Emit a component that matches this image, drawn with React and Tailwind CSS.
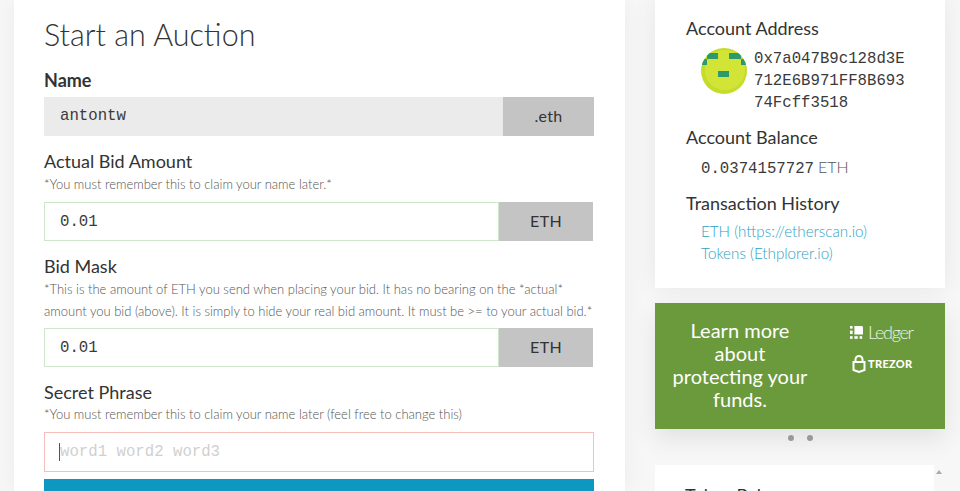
import React from 'react';

const mono = "font-['Liberation_Mono',monospace]";

const Unit = ({ children, className = '' }) => (
  <div className={`flex items-center justify-center bg-[#c4c4c4] pb-[2px] text-[16px] tracking-[0.3px] text-[#333] ${className}`}>
    {children}
  </div>
);

const AmountRow = () => (
  <div className="flex h-[39px] w-[549px]">
    <input
      readOnly
      value="0.01"
      className={`h-full w-[455px] border border-[#cfe6cc] bg-white px-[15px] text-[15.7px] text-[#3a3a3a] outline-none ${mono}`}
    />
    <Unit className="w-[94px]">ETH</Unit>
  </div>
);

const Note = ({ children }) => (
  <p className="whitespace-nowrap text-[13px] font-light leading-[22px] text-[#555]">{children}</p>
);

const Label = ({ children, className = 'leading-[23px]' }) => (
  <h4 className={`text-[18px] text-[#333] ${className}`}>{children}</h4>
);

const Identicon = () => (
  <svg viewBox="0 0 46 46" className="h-[46px] w-[46px] shrink-0 rounded-full">
    <rect width="46" height="46" fill="#c6dc2c" />
    <circle cx="24" cy="22" r="20" fill="#d2e435" />
    <rect x="6" y="5" width="11" height="6" fill="#2d9a6e" />
    <rect x="28" y="5" width="12" height="6" fill="#2d9a6e" />
    <rect x="1" y="11" width="5" height="6" fill="#2d9a6e" />
    <rect x="40" y="11" width="5" height="6" fill="#2d9a6e" />
    <rect x="17" y="23" width="11" height="6" fill="#2d9a6e" />
  </svg>
);

const LedgerMark = () => (
  <svg viewBox="0 0 13 13" className="h-[13px] w-[13px]" fill="#fff">
    <rect x="0" y="0" width="2.6" height="2.6" />
    <rect x="0" y="4.6" width="2.6" height="3.4" />
    <rect x="0" y="10.2" width="2.6" height="2.6" />
    <rect x="4.4" y="10.2" width="3.4" height="2.6" />
    <rect x="9.6" y="10.2" width="2.6" height="2.6" />
    <path d="M4.4 0H11.6Q13 0 13 1.4V8.4H4.4Z" />
  </svg>
);

const TrezorMark = () => (
  <svg viewBox="0 0 14 18" className="h-[18px] w-[14px]" fill="none" stroke="#fff" strokeWidth="2">
    <path d="M3.5 7V4.5a3.5 3.5 0 0 1 7 0V7" />
    <path d="M1.5 7H12.5V15L7 17L1.5 15Z" />
  </svg>
);

export default function App() {
  return (
    <div className="flex h-[491px] w-[960px] gap-[30px] overflow-hidden bg-[#f7f7f7] pl-[14px] font-['Lato',sans-serif]">
      <main className="h-full w-[611px] shrink-0 bg-white px-[30px] pt-[13px] shadow-[0_0_24px_rgba(0,0,0,0.05)]">
        <h1 className="text-[30.5px] font-light leading-[42px] text-[#333]">Start an Auction</h1>

        <h4 className="mt-[13px] text-[18px] font-bold leading-[24px] text-[#333]">Name</h4>
        <div className="mt-[5px] flex h-[39px] w-[550px]">
          <div className={`flex flex-1 items-center bg-[#ebebeb] px-[16px] pt-[1px] text-[15.7px] text-[#3a3a3a] ${mono}`}>antontw</div>
          <Unit className="w-[91px] text-[15px]">.eth</Unit>
        </div>

        <div className="mt-[14px]">
          <Label>Actual Bid Amount</Label>
          <Note>*You must remember this to claim your name later.*</Note>
        </div>
        <div className="mt-[7px]">
          <AmountRow />
        </div>

        <div className="mt-[14px]">
          <Label>Bid Mask</Label>
          <Note>
            *This is the amount of ETH you send when placing your bid. It has no bearing on the *actual*
            <br />
            amount you bid (above). It is simply to hide your real bid amount. It must be &gt;= to your actual bid.*
          </Note>
        </div>
        <div className="mt-[6px]">
          <AmountRow />
        </div>

        <div className="mt-[15px]">
          <Label className="leading-[21px]">Secret Phrase</Label>
          <Note>*You must remember this to claim your name later (feel free to change this)</Note>
        </div>
        <div className="relative mt-[7px] h-[40px] w-[550px]">
          <input
            readOnly
            placeholder="word1 word2 word3"
            className={`h-full w-full border border-[#f5c0bb] bg-white px-[15px] text-[15.7px] outline-none placeholder:text-[#d0d0d0] ${mono}`}
          />
          <span className="absolute left-[15px] top-[11px] h-[18px] w-px bg-[#555]" />
        </div>
        <div className="mt-[7px] h-[40px] w-[550px] bg-[#0e97c0]" />
      </main>

      <aside className="flex w-[290px] shrink-0 flex-col">
        <section className="h-[288px] shrink-0 bg-white pl-[31px] pt-[16px] shadow-[0_0_24px_rgba(0,0,0,0.07)]">
          <h5 className="text-[18px] leading-[24px] text-[#333]">Account Address</h5>
          <div className="mt-[8px] flex gap-[7px] pl-[15px]">
            <Identicon />
            <div className={`w-[152px] break-all text-[15.7px] leading-[22px] text-[#3a3a3a] ${mono}`}>
              0x7a047B9c128d3E712E6B971FF8B69374Fcff3518
            </div>
          </div>
          <h5 className="mt-[11px] text-[18px] leading-[24px] text-[#333]">Account Balance</h5>
          <p className="mt-[6px] pl-[15px] text-[16px] leading-[24px] text-[#333]">
            <span className={`text-[15.7px] text-[#3a3a3a] ${mono}`}>0.0374157727</span>{' '}
            <span className="font-light text-[#555]">ETH</span>
          </p>
          <h5 className="mt-[10px] text-[18px] leading-[24px] text-[#333]">Transaction History</h5>
          <ul className="mt-[5px] pl-[15px] text-[15.2px] font-light leading-[22px] text-[#2f9fc4]">
            <li>ETH (https://etherscan.io)</li>
            <li>Tokens (Ethplorer.io)</li>
          </ul>
        </section>

        <section className="mt-[15px] flex h-[126px] shrink-0 bg-[#6b9a3d] shadow-[0_10px_24px_rgba(0,0,0,0.09)]">
          <p className="ml-[15px] w-[140px] shrink-0 pt-[16px] text-center text-[20px] leading-[23px] text-white">
            Learn more about protecting your funds.
          </p>
          <div className="flex flex-col pl-[40px] pt-[19px]">
            <div className="flex items-center gap-[5px]">
              <LedgerMark />
              <span className="text-[18px] font-light leading-[20px] tracking-[-1.3px] text-[#eef3e6]">Ledger</span>
            </div>
            <div className="mt-[13px] flex items-center gap-[2px] pl-[2px]">
              <TrezorMark />
              <span className="text-[11px] font-black leading-[18px] tracking-[0.3px] text-white">TREZOR</span>
            </div>
          </div>
        </section>

        <div className="mt-[6px] flex h-[6px] shrink-0 justify-center gap-[13px]">
          <span className="h-[6px] w-[6px] rounded-full bg-[#999]" />
          <span className="h-[6px] w-[6px] rounded-full bg-[#999]" />
        </div>

        <div className="relative mt-[24px] flex-1">
          <section className="h-[60px] w-[279px] bg-white pl-[30px] pt-[18px]">
            <h5 className="text-[18px] leading-[24px] text-[#333]">Token Balances</h5>
          </section>
          <span className="absolute left-[281px] top-[5px] h-0 w-0 border-x-[3px] border-b-[4px] border-x-transparent border-b-[#aaa]" />
        </div>
      </aside>
    </div>
  );
}
